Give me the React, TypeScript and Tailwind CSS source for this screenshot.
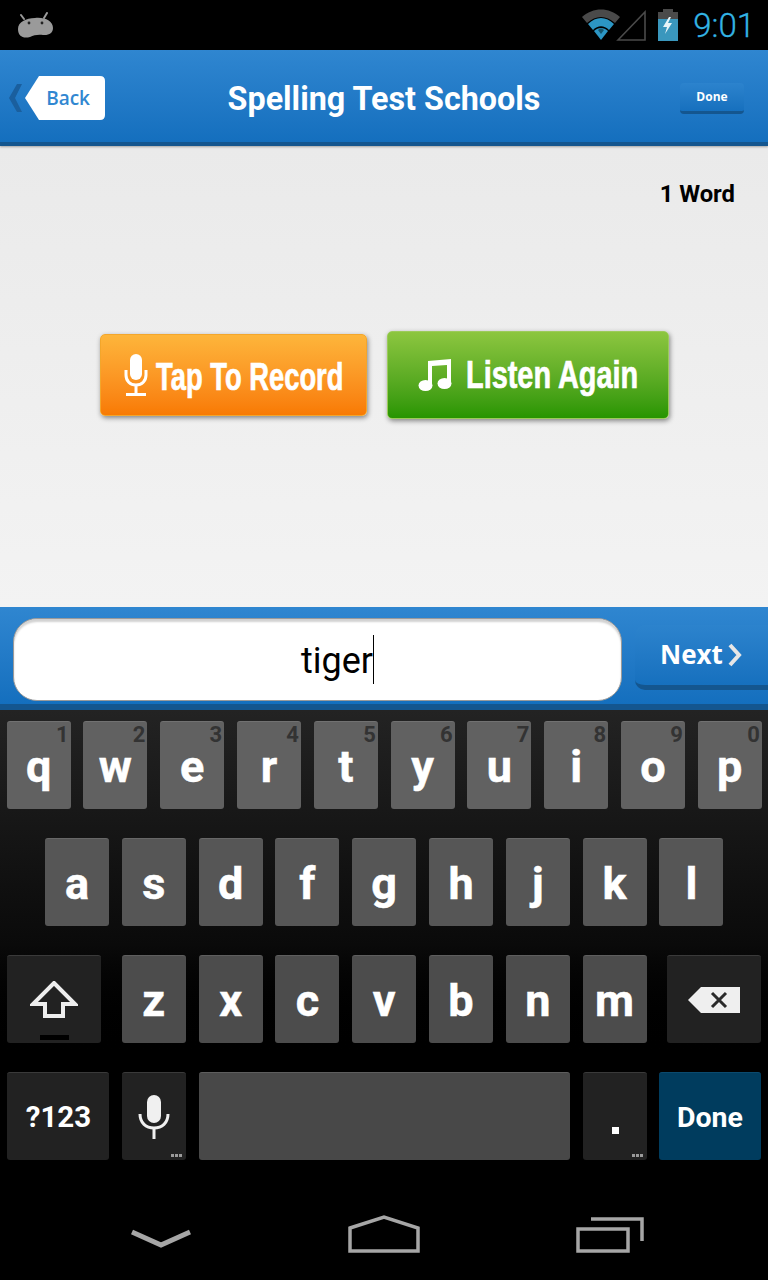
/*
 * Spelling test screen on an Android 4 phone, with the stock keyboard open.
 */

const ROW_ONE = [
  ["q", "1"],
  ["w", "2"],
  ["e", "3"],
  ["r", "4"],
  ["t", "5"],
  ["y", "6"],
  ["u", "7"],
  ["i", "8"],
  ["o", "9"],
  ["p", "0"],
];
const ROW_TWO = ["a", "s", "d", "f", "g", "h", "j", "k", "l"];
const ROW_THREE = ["z", "x", "c", "v", "b", "n", "m"];

function Dots() {
  return (
    <span className="absolute right-[4px] bottom-[3px] flex gap-[1px]">
      <span className="w-[3px] h-[3px] bg-[#9a9a9a]" />
      <span className="w-[3px] h-[3px] bg-[#9a9a9a]" />
      <span className="w-[3px] h-[3px] bg-[#9a9a9a]" />
    </span>
  );
}

function StatusBar() {
  return (
    <div className="h-[50px] bg-black flex items-center pl-[18px] pr-[13px]">
      <svg width="36" height="26" viewBox="0 0 36 26">
        <path d="M3 3 L6 7 M29 1 L26 6" stroke="#9a9a9a" strokeWidth="2" strokeLinecap="round" />
        <path d="M0 17 C0 10 8 6 17 6 C27 5 35 9 35 16 C35 21 31 23.5 25 23 C20 22.5 16 23 12 25 C5 27 0 24 0 17 Z" fill="#9a9a9a" />
        <circle cx="11" cy="11" r="1.4" fill="#222" />
        <circle cx="24" cy="11" r="1.4" fill="#222" />
      </svg>
      <div className="flex-1" />
      <svg width="66" height="32" viewBox="0 0 66 32" className="mr-[11px]">
        <path d="M1 8 C12 -2 28 -2 39 8 L34 14 C25 6 15 6 6 14 Z" fill="#4a4a4a" />
        <path d="M7 15 C15 7 25 7 33 15 L28 21 C23 16 17 16 12 21 Z" fill="#2c96c4" />
        <path d="M13 22 C17 18 23 18 27 22 L20 31 Z" fill="#2c96c4" />
        <path d="M17 21 C19 19 21 19 23 21 L20 25 Z" fill="#14566f" />
        <path d="M37 31 L64 3 L64 31 Z" fill="none" stroke="#4a4a4a" strokeWidth="1.6" />
      </svg>
      <svg width="20" height="32" viewBox="0 0 20 32" className="mr-[15px]">
        <rect x="5" y="0" width="10" height="4" fill="#4a4a4a" />
        <rect x="0" y="3" width="20" height="8" fill="#4a4a4a" />
        <rect x="0" y="10" width="20" height="22" fill="#3a97bd" />
        <path d="M11 8 L5 18 L9 18 L7 25 L14 14 L10 14 L13 8 Z" fill="#e8f4f8" />
      </svg>
      <span className="font-['Roboto',sans-serif] font-light text-[33px] leading-none text-[#33b5e5] [-webkit-text-stroke:0.3px_#33b5e5]">9:01</span>
    </div>
  );
}

function Header() {
  return (
    <div className="h-[96px] bg-gradient-to-b from-[#2f86d0] to-[#146fbe] border-b-4 border-[#14568f] flex items-center shadow-[0_1px_2px_rgba(0,0,0,0.3)] relative">
      <div className="w-[200px] flex items-center pl-[9px] pt-[4px]">
        <svg width="14" height="28" viewBox="0 0 14 28">
          <path d="M13 0 L8 0 L0 14 L8 28 L13 28 L6 14 Z" fill="#1a5f9e" />
        </svg>
        <div className="relative w-[81px] h-[44px] ml-[2px] flex items-center justify-end pr-[16px]">
          <svg width="81" height="44" viewBox="0 0 81 44" className="absolute inset-0">
            <path d="M14 0 L75 0 Q80 0 80 5 L80 39 Q80 44 75 44 L14 44 L0 22 Z" fill="#fff" />
          </svg>
          <span className="relative font-['Open_Sans',sans-serif] font-semibold text-[19px] text-[#3187d1] leading-none">Back</span>
        </div>
      </div>
      <h1 className="flex-1 text-center font-['Roboto',sans-serif] font-bold text-[32.3px] leading-none text-white whitespace-nowrap pt-[6px]">
        Spelling Test Schools
      </h1>
      <div className="w-[200px] flex justify-end pr-[24px] pt-[4px]">
        <span className="w-[64px] h-[31px] rounded-[4px] bg-gradient-to-b from-[#2c83cd] to-[#1670be] border-b-[3px] border-[#14568f] flex items-center justify-center font-['Open_Sans',sans-serif] font-bold text-[12px] text-white">
          Done
        </span>
      </div>
    </div>
  );
}

function Main() {
  return (
    <div className="h-[461px] bg-gradient-to-b from-[#eaeaea] to-[#f3f3f3] flex flex-col">
      <div className="pt-[34px] pr-[33px] text-right font-['Roboto',sans-serif] font-bold text-[23.8px] leading-[28px] text-black">
        1 Word
      </div>
      <div className="mt-[123px] ml-[100px] flex items-center gap-[20px]">
        <div className="w-[267px] h-[82px] rounded-[5px] bg-gradient-to-b from-[#fdb53a] to-[#f87a02] border border-[#f3a62b] shadow-[1px_2px_5px_rgba(0,0,0,0.45)] flex items-center pl-[23px] text-white">
          <svg width="24" height="44" viewBox="0 0 24 44" fill="none">
            <rect x="6" y="1" width="12" height="26" rx="6" fill="#fff" />
            <path d="M2 17 L2 22 C2 28 6 32 12 32 C18 32 22 28 22 22 L22 17" stroke="#fff" strokeWidth="3" />
            <path d="M12 32 L12 41 M2 41.5 L22 41.5" stroke="#fff" strokeWidth="3" />
          </svg>
          <span className="ml-[8px] mt-[4px] w-[187px] inline-block whitespace-nowrap origin-left scale-x-[0.72] font-['Liberation_Sans',sans-serif] font-bold text-[38px] leading-none [-webkit-text-stroke:0.7px_white]">
            Tap To Record
          </span>
        </div>
        <div className="w-[282px] h-[88px] rounded-[5px] bg-gradient-to-b from-[#8cc63f] to-[#269500] border border-[#9ccb5a] shadow-[1px_2px_5px_rgba(0,0,0,0.45)] flex items-center pl-[30px] text-white">
          <svg width="34" height="34" viewBox="0 0 34 34">
            <path d="M10 3 L33 1 L33 25 L29 25 L29 7 L14 8 L14 28 L10 28 Z" fill="#fff" />
            <ellipse cx="7.5" cy="27.5" rx="7" ry="5.5" fill="#fff" />
            <ellipse cx="26.5" cy="25.5" rx="7" ry="5.5" fill="#fff" />
          </svg>
          <span className="ml-[14px] w-[172px] inline-block whitespace-nowrap origin-left scale-x-[0.76] font-['Liberation_Sans',sans-serif] font-bold text-[38px] leading-none [-webkit-text-stroke:0.7px_white]">
            Listen Again
          </span>
        </div>
      </div>
    </div>
  );
}

function AnswerBar() {
  return (
    <div className="h-[103px] bg-gradient-to-b from-[#2f86d0] to-[#146fbe] border-b-[6px] border-[#14568f] flex items-start pl-[13px] pt-[11px]">
      <div className="w-[609px] h-[83px] rounded-[24px] bg-white border border-[#9a9a9a] shadow-[inset_0_3px_2px_rgba(0,0,0,0.18)] flex items-center justify-center pl-[40px]">
        <span className="font-['Roboto',sans-serif] text-[36px] leading-none text-black pt-[3px]">tiger</span>
        <span className="w-[1px] h-[49px] bg-black" />
      </div>
      <div className="ml-[13px] mt-[7px] flex-1 h-[65px] rounded-l-[10px] bg-gradient-to-b from-[#2c83cd] to-[#1670be] border-b-[5px] border-[#14568f] flex items-center pl-[25px] pb-[3px]">
        <span className="font-['Open_Sans',sans-serif] font-bold text-[26px] leading-none text-white">Next</span>
        <svg width="16" height="24" viewBox="0 0 16 24" className="ml-[4px] mt-[3px]">
          <path d="M3 2 L12 12 L3 22" fill="none" stroke="#e6e6e6" strokeWidth="4" />
        </svg>
      </div>
    </div>
  );
}

function Key({ label, hint, color }: { label: string; hint?: string; color: string }) {
  return (
    <div className={`relative w-[64px] h-[88px] rounded-[3px] ${color} border-t border-white/10 pt-[2px] flex items-center justify-center font-['Roboto',sans-serif] font-bold text-[45px] leading-none text-white [-webkit-text-stroke:0.5px_white]`}>
      {hint && (
        <span className="absolute top-[2px] right-[2px] font-bold text-[22px] leading-none text-[#333] [-webkit-text-stroke:0px]">{hint}</span>
      )}
      {label}
    </div>
  );
}

function DarkKey({ className, children }: { className: string; children: React.ReactNode }) {
  return (
    <div className={`relative h-[88px] rounded-[3px] bg-[#222] border-t border-[#3a3a3a] flex items-center justify-center ${className}`}>
      {children}
    </div>
  );
}

function Keyboard() {
  return (
    <div className="bg-gradient-to-b from-[#232323] via-[#0a0a0a] via-[50%] to-black to-[75%] h-[470px] pt-[11px] flex flex-col gap-[29px] font-['Roboto',sans-serif]">
      <div className="flex pl-[6.6px] gap-[12.8px]">
        {ROW_ONE.map(([k, n]) => (
          <Key key={k} label={k} hint={n} color="bg-[#616161]" />
        ))}
      </div>
      <div className="flex pl-[45px] gap-[12.8px]">
        {ROW_TWO.map((k) => (
          <Key key={k} label={k} color="bg-[#565656]" />
        ))}
      </div>
      <div className="flex pl-[7px]">
        <DarkKey className="w-[94px] mr-[20.8px]">
          <svg width="48" height="38" viewBox="0 0 48 38" fill="none">
            <path d="M24 2 L45 23 L33 23 L33 35 L15 35 L15 23 L3 23 Z" stroke="#eee" strokeWidth="4" />
          </svg>
          <span className="absolute bottom-[3px] left-[33px] w-[29px] h-[5px] bg-black" />
        </DarkKey>
        <div className="flex gap-[12.8px]">
          {ROW_THREE.map((k) => (
            <Key key={k} label={k} color="bg-[#4c4c4c]" />
          ))}
        </div>
        <DarkKey className="w-[94px] ml-[20.4px]">
          <svg width="52" height="26" viewBox="0 0 52 26">
            <path d="M13 0 L52 0 L52 26 L13 26 L0 13 Z" fill="#efefef" />
            <path d="M24 6 L38 20 M38 6 L24 20" stroke="#2a2a2a" strokeWidth="3" />
          </svg>
        </DarkKey>
      </div>
      <div className="flex pl-[7px]">
        <DarkKey className="w-[102px] pl-[1px] pt-[3px] text-white font-bold text-[29.5px] leading-none">?123</DarkKey>
        <DarkKey className="w-[64px] ml-[13px]">
          <svg width="32" height="44" viewBox="0 0 32 44" fill="none">
            <rect x="9" y="0" width="14" height="28" rx="7" fill="#f0f0f0" />
            <path d="M2 19 C2 28 8 33 16 33 C24 33 30 28 30 19" stroke="#f0f0f0" strokeWidth="3" />
            <path d="M16 33 L16 44" stroke="#f0f0f0" strokeWidth="3" />
          </svg>
          <Dots />
        </DarkKey>
        <div className="w-[371px] ml-[13px] h-[88px] rounded-[3px] bg-[#484848] border-t border-[#5e5e5e]" />
        <DarkKey className="w-[64px] ml-[13px] items-end pb-[26px]">
          <span className="w-[7px] h-[7px] bg-white" />
          <Dots />
        </DarkKey>
        <DarkKey className="w-[102px] ml-[12px] pt-[3px] !bg-[#003c5e] !border-[#0b4a6e] text-white font-bold text-[28.5px] leading-none">
          Done
        </DarkKey>
      </div>
    </div>
  );
}

function NavBar() {
  return (
    <div className="h-[100px] bg-black flex justify-between items-start pl-[131px] pr-[124px] pt-[35px]">
      <svg width="60" height="20" viewBox="0 0 60 20" className="mt-[14px]" fill="none">
        <path d="M1 3 L30 16 L59 3" stroke="#a6a6a6" strokeWidth="5" />
      </svg>
      <svg width="72" height="38" viewBox="0 0 72 38" fill="none">
        <path d="M2 13 L36 2 L70 13 L70 36 L2 36 Z" stroke="#a6a6a6" strokeWidth="3.5" />
      </svg>
      <svg width="68" height="36" viewBox="0 0 68 36" className="mt-[2px]" fill="none">
        <rect x="2" y="12" width="50" height="22" stroke="#a6a6a6" strokeWidth="3.5" />
        <path d="M15 2 L66 2 L66 24" stroke="#a6a6a6" strokeWidth="3.5" />
      </svg>
    </div>
  );
}

export default function App() {
  return (
    <div className="w-[768px] h-[1280px] overflow-hidden bg-black">
      <StatusBar />
      <Header />
      <Main />
      <AnswerBar />
      <Keyboard />
      <NavBar />
    </div>
  );
}
